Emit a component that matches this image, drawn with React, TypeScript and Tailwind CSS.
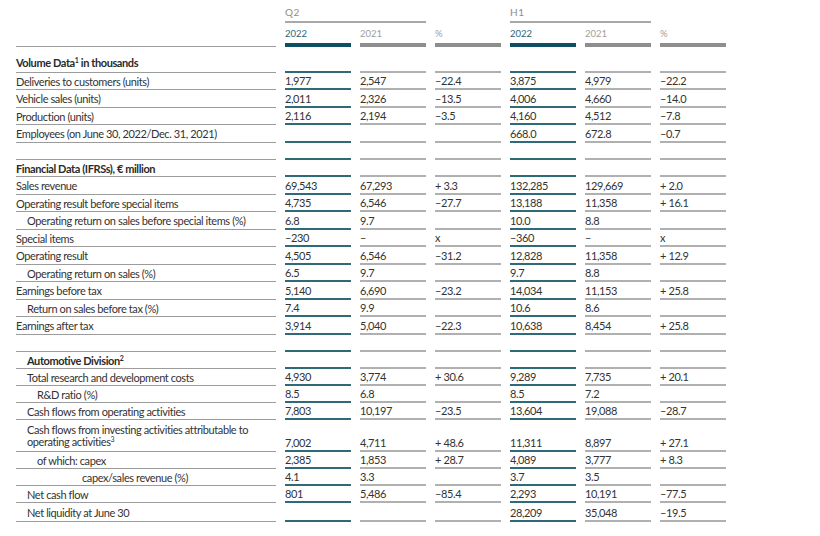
import React from 'react';

type Cell = string | null;

interface RowDef {
  label: React.ReactNode;
  indent?: number;
  bold?: boolean;
  h: string;
  vals?: Cell[];
}

const Sup = ({ n }: { n: string }) => <sup className="text-[7px] relative -top-[4px]">{n}</sup>;

const rows: RowDef[] = [
  { label: <>Volume Data<Sup n="1" /> in thousands</>, bold: true, h: 'h-[26px]' },
  { label: 'Deliveries to customers (units)', h: 'h-[17px]', vals: ['1,977', '2,547', '–22.4', '3,875', '4,979', '–22.2'] },
  { label: 'Vehicle sales (units)', h: 'h-[18px]', vals: ['2,011', '2,326', '–13.5', '4,006', '4,660', '–14.0'] },
  { label: 'Production (units)', h: 'h-[17px]', vals: ['2,116', '2,194', '–3.5', '4,160', '4,512', '–7.8'] },
  { label: 'Employees (on June 30, 2022/Dec. 31, 2021)', h: 'h-[18px]', vals: [null, null, null, '668.0', '672.8', '–0.7'] },
  { label: '', h: 'h-[17px]' },
  { label: 'Financial Data (IFRSs), € million', bold: true, h: 'h-[17px]' },
  { label: 'Sales revenue', h: 'h-[18px]', vals: ['69,543', '67,293', '+ 3.3', '132,285', '129,669', '+ 2.0'] },
  { label: 'Operating result before special items', h: 'h-[17px]', vals: ['4,735', '6,546', '–27.7', '13,188', '11,358', '+ 16.1'] },
  { label: 'Operating return on sales before special items (%)', indent: 1, h: 'h-[18px]', vals: ['6.8', '9.7', null, '10.0', '8.8', null] },
  { label: 'Special items', h: 'h-[17px]', vals: ['–230', '–', 'x', '–360', '–', 'x'] },
  { label: 'Operating result', h: 'h-[18px]', vals: ['4,505', '6,546', '–31.2', '12,828', '11,358', '+ 12.9'] },
  { label: 'Operating return on sales (%)', indent: 1, h: 'h-[17px]', vals: ['6.5', '9.7', null, '9.7', '8.8', null] },
  { label: 'Earnings before tax', h: 'h-[18px]', vals: ['5,140', '6,690', '–23.2', '14,034', '11,153', '+ 25.8'] },
  { label: 'Return on sales before tax (%)', indent: 1, h: 'h-[17px]', vals: ['7.4', '9.9', null, '10.6', '8.6', null] },
  { label: 'Earnings after tax', h: 'h-[18px]', vals: ['3,914', '5,040', '–22.3', '10,638', '8,454', '+ 25.8'] },
  { label: '', h: 'h-[17px]' },
  { label: <>Automotive Division<Sup n="2" /></>, indent: 1, bold: true, h: 'h-[17px]' },
  { label: 'Total research and development costs', indent: 1, h: 'h-[17px]', vals: ['4,930', '3,774', '+ 30.6', '9,289', '7,735', '+ 20.1'] },
  { label: 'R&D ratio (%)', indent: 2, h: 'h-[17px]', vals: ['8.5', '6.8', null, '8.5', '7.2', null] },
  { label: 'Cash flows from operating activities', indent: 1, h: 'h-[17px]', vals: ['7,803', '10,197', '–23.5', '13,604', '19,088', '–28.7'] },
  {
    label: <>Cash flows from investing activities attributable to<br />operating activities<Sup n="3" /></>,
    indent: 1, h: 'h-[32px]', vals: ['7,002', '4,711', '+ 48.6', '11,311', '8,897', '+ 27.1'],
  },
  { label: 'of which: capex', indent: 2, h: 'h-[17px]', vals: ['2,385', '1,853', '+ 28.7', '4,089', '3,777', '+ 8.3'] },
  { label: 'capex/sales revenue (%)', indent: 3, h: 'h-[17px]', vals: ['4.1', '3.3', null, '3.7', '3.5', null] },
  { label: 'Net cash flow', indent: 1, h: 'h-[17px]', vals: ['801', '5,486', '–85.4', '2,293', '10,191', '–77.5'] },
  { label: 'Net liquidity at June 30', indent: 1, h: 'h-[19px]', vals: [null, null, null, '28,209', '35,048', '–19.5'] },
];

function indentClass(i?: number) {
  if (i === 1) return 'pl-[11px]';
  if (i === 2) return 'pl-[21px]';
  if (i === 3) return 'pl-[66px]';
  return 'pl-0';
}

function DataCell({ v, teal, h }: { v: Cell; teal: boolean; h: string }) {
  return (
    <div className={`${h} flex flex-col justify-end`}>
      <div className="leading-[13px] pb-[1px] whitespace-nowrap">{v}</div>
      <div className={teal ? 'h-[2px] shrink-0 bg-[#2f6a79]' : 'h-[2px] shrink-0 bg-[#b0b0b0]'} />
    </div>
  );
}

export default function App() {
  return (
    <div
      className="w-[820px] h-[536px] bg-white overflow-hidden pl-4 text-[11px] tracking-[-0.4px] text-[#333333]"
      style={{ fontFamily: 'Lato, "Liberation Sans", sans-serif' }}
    >
      <div className="grid grid-cols-[260px_66px_66px_66px_66px_66px_66px] gap-x-[9px]">
        {/* group header */}
        <div className="h-[23px]" />
        <div className="col-span-2 h-[23px] flex flex-col justify-end">
          <div className="pb-[3px] text-[10px] text-[#8d8d8d] tracking-[0.5px] leading-[12px]">Q2</div>
          <div className="h-[2px] bg-[#a8a8a8]" />
        </div>
        <div className="h-[23px]" />
        <div className="col-span-2 h-[23px] flex flex-col justify-end">
          <div className="pb-[3px] text-[10px] text-[#8d8d8d] tracking-[0.5px] leading-[12px]">H1</div>
          <div className="h-[2px] bg-[#a8a8a8]" />
        </div>
        <div className="h-[23px]" />

        {/* year header */}
        <div className="h-[24px] flex flex-col justify-end">
          <div className="h-px bg-[#9c9c9c]" />
        </div>
        {['2022', '2021', '%', '2022', '2021', '%'].map((t, i) => (
          <div key={i} className="h-[24px] flex flex-col justify-end">
            <div
              className={
                i % 3 === 0
                  ? 'pb-[3px] leading-[12px] text-[9.5px] tracking-normal text-[#2d6478]'
                  : 'pb-[3px] leading-[12px] text-[9.5px] tracking-normal text-[#a0a0a0]'
              }
            >
              {t}
            </div>
            <div className={i % 3 === 0 ? 'h-[4px] bg-[#0f4f66]' : 'h-[4px] bg-[#8e8e8e]'} />
          </div>
        ))}

        {rows.map((r, ri) => (
          <React.Fragment key={ri}>
            <div className={`${r.h} flex flex-col`}>
              <div
                className={`flex-1 flex ${ri === 0 ? 'items-end pb-[3px]' : 'items-center pt-[1px]'} leading-[12px] ${indentClass(
                  r.indent,
                )} ${r.bold ? 'font-bold text-[#2a2a2a]' : ''}`}
              >
                <span>{r.label}</span>
              </div>
              <div className="h-px shrink-0 bg-[#9c9c9c]" />
            </div>
            {[0, 1, 2, 3, 4, 5].map((c) => (
              <DataCell key={c} v={r.vals ? r.vals[c] : null} teal={c % 3 === 0} h={r.h} />
            ))}
          </React.Fragment>
        ))}
      </div>
    </div>
  );
}
